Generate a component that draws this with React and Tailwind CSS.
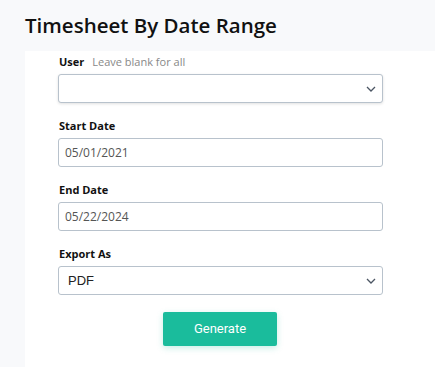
import React from 'react'

const font = { fontFamily: '"Open Sans", "Noto Sans", sans-serif' }

function Chevron() {
  return (
    <svg width="10" height="6" viewBox="0 0 10 6" className="absolute right-[6px] top-1/2 -translate-y-1/2">
      <path d="M1 1l4 4 4-4" fill="none" stroke="#4b5563" strokeWidth="1.3" />
    </svg>
  )
}

function Label({ children, hint }) {
  return (
    <div className="flex items-baseline gap-[8px] h-[15px] leading-[15px] mb-[5px] ml-[1px]">
      <span className="text-[11px] font-bold text-[#111]">{children}</span>
      {hint && <span className="text-[11px] text-[#888]">{hint}</span>}
    </div>
  )
}

export default function App() {
  return (
    <div className="w-[435px] h-[367px] bg-[#f8f9fb] overflow-hidden" style={font}>
      <h1 className="pl-[25px] pt-[11px] h-[51px] text-[20.5px] leading-[28px] font-semibold text-[#111]">
        Timesheet By Date Range
      </h1>
      <div className="ml-[25px] h-[316px] bg-white pl-[33px] pt-[3px]">
        <div className="w-[325px] flex flex-col gap-[15px]">
          <div>
            <Label hint="Leave blank for all">User</Label>
            <div className="relative h-[29px] rounded-[3px] border border-[#b8c2cc] bg-white shadow-[0_1px_3px_rgba(0,0,0,0.12)]">
              <Chevron />
            </div>
          </div>

          <div>
            <Label>Start Date</Label>
            <div className="flex items-center h-[29px] rounded-[3px] border border-[#b8c2cc] px-[6px] text-[12px] text-[#555]">
              05/01/2021
            </div>
          </div>

          <div>
            <Label>End Date</Label>
            <div className="flex items-center h-[29px] rounded-[3px] border border-[#b8c2cc] px-[6px] text-[12px] text-[#555]">
              05/22/2024
            </div>
          </div>

          <div>
            <Label>Export As</Label>
            <div className="relative flex items-center h-[29px] rounded-[3px] border border-[#b8c2cc] pl-[9px] text-[13px] text-[#222]" style={{ fontFamily: '"Liberation Sans", Arial, sans-serif' }}>
              PDF
              <Chevron />
            </div>
          </div>

          <div className="flex justify-center mt-[2px] pr-[1px]">
            <button
              className="w-[114px] h-[34px] rounded-[2px] bg-[#1abc9c] text-white text-[13px] shadow-[0_2px_6px_rgba(26,188,156,0.25)]"
              style={{ fontFamily: 'Roboto, sans-serif' }}
            >
              Generate
            </button>
          </div>
        </div>
      </div>
    </div>
  )
}
